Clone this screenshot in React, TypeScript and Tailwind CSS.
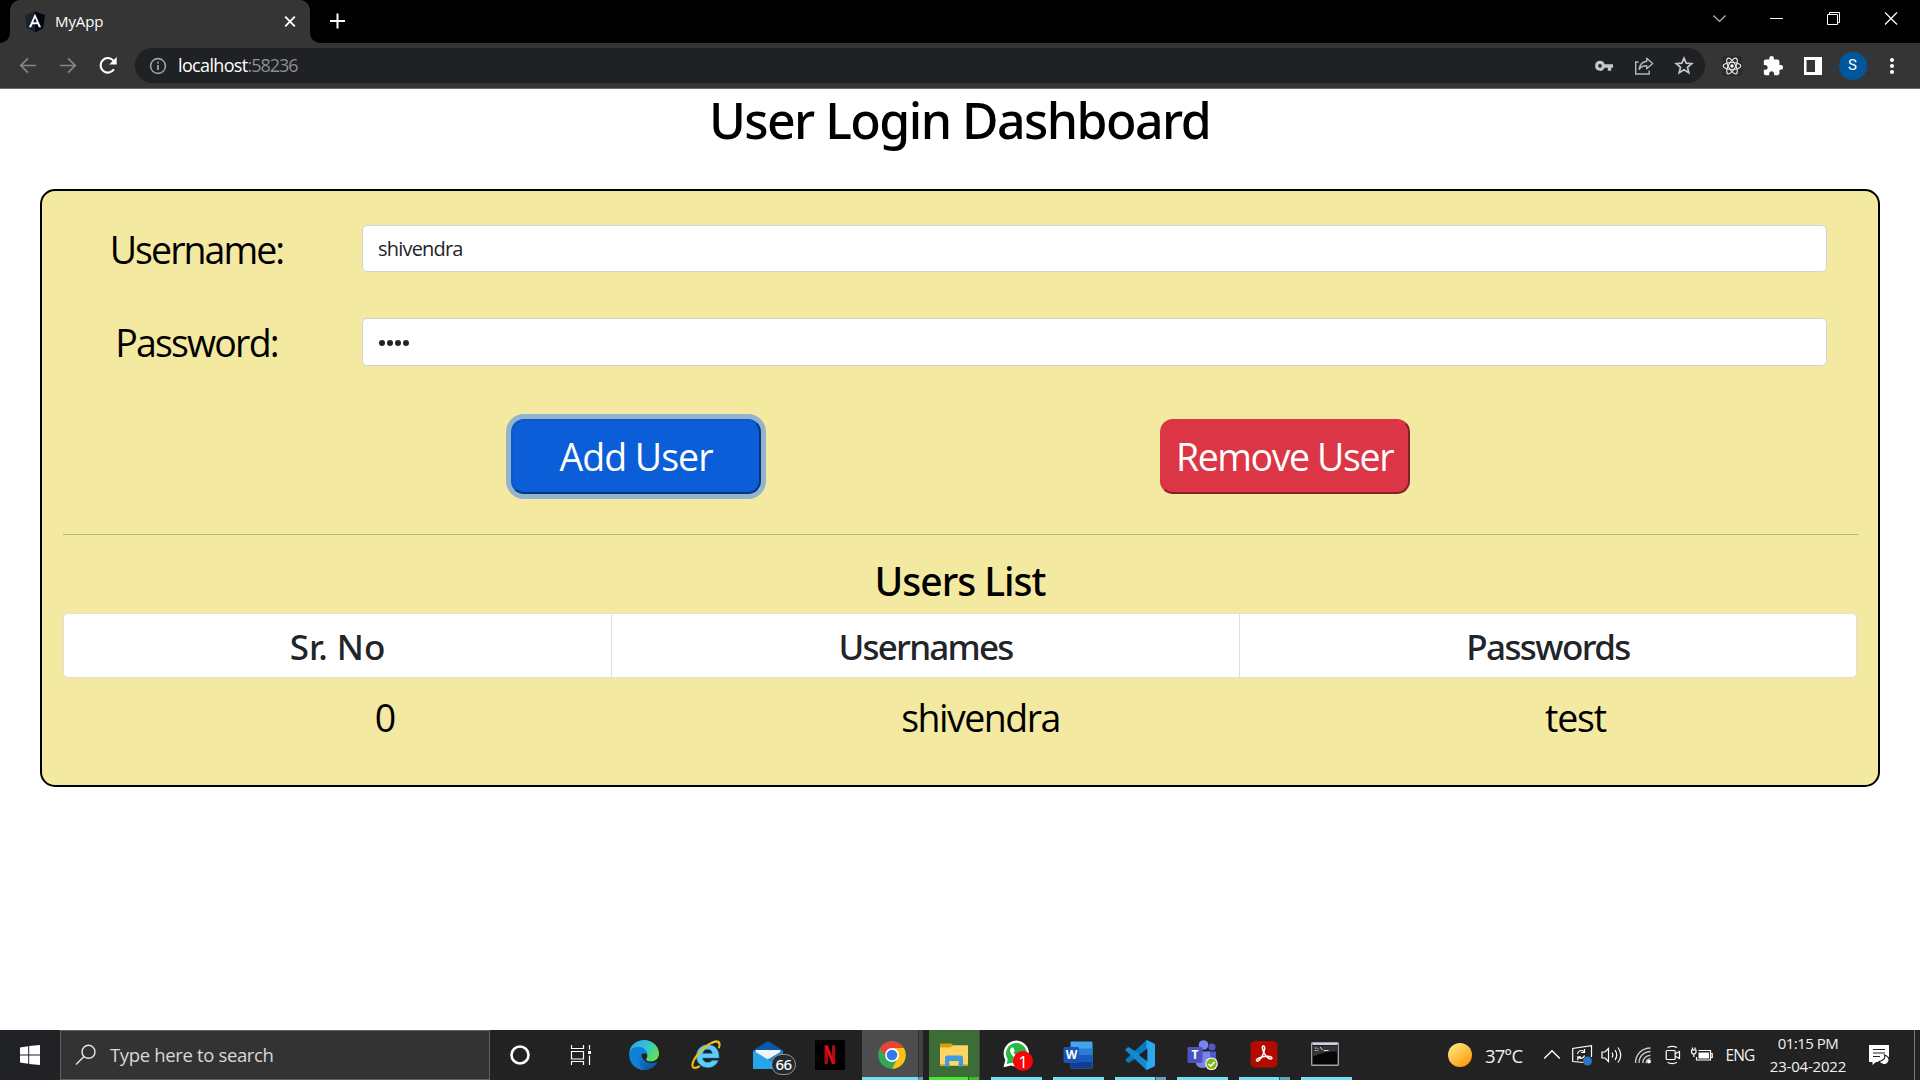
import type { ReactNode } from "react";

const sans = "font-['Open_Sans',sans-serif]";

/* ---------- Browser chrome ---------- */

function TabStrip() {
  return (
    <div className="flex h-[43px] items-start bg-black">
      <div className="flex w-[10px] self-stretch items-end bg-[#353535]">
        <div className="h-full w-full rounded-br-[10px] bg-black" />
      </div>
      <div className="flex h-[43px] w-[300px] items-center rounded-t-[10px] bg-[#353535] pl-[15px]">
        <svg width="20" height="22" viewBox="0 0 20 22" className="shrink-0">
          <path d="M10 0.500 L19.800 4 L18.300 17 L10 21.500 L1.700 17 L0.200 4Z" fill="#1d2230" />
          <path d="M10 0.500 L19.800 4 L18.300 17 L10 21.500Z" fill="#02060f" />
          <path d="M10 2.700 L3.900 16.300 H6.200 L7.400 13.200 H12.600 L13.800 16.300 H16.100Z M10 7 L11.800 11.300 H8.200Z" fill="#fff" fillRule="evenodd" />
        </svg>
        <span className="ml-[10px] w-[225px] -mt-[2px] text-[15px] leading-5 tracking-[-0.1px] text-white">MyApp</span>
        <svg width="20" height="20" viewBox="0 0 20 20" stroke="#fff" strokeWidth="1.900">
          <path d="M5.200 4.700L14.800 14.300M14.800 4.700L5.200 14.300" />
        </svg>
      </div>
      <div className="h-[43px] w-[10px] bg-[#353535]">
        <div className="h-full w-full rounded-bl-[10px] bg-black" />
      </div>
      <svg width="35" height="43" viewBox="0 0 35 43" stroke="#fff" strokeWidth="2">
        <path d="M10 21h15M17.500 13.500v15" />
      </svg>
      <div className="ml-auto flex h-[37px] items-center pr-[1px]">
        <svg width="57" height="37" viewBox="0 0 57 37" fill="none" stroke="#bbb" strokeWidth="1.200">
          <path d="M22.500 15.500l6 6 6-6" />
        </svg>
        <svg width="57" height="37" viewBox="0 0 57 37" fill="none" stroke="#fff">
          <path d="M22 18.500h13" />
        </svg>
        <svg width="57" height="37" viewBox="0 0 57 37" fill="none" stroke="#fff">
          <path d="M22.500 14.500h10v10h-10zM24.500 14.500v-2h10v10h-2" />
        </svg>
        <svg width="57" height="37" viewBox="0 0 57 37" fill="none" stroke="#fff" strokeWidth="1.200">
          <path d="M23 12.500l12 12M35 12.500l-12 12" />
        </svg>
      </div>
    </div>
  );
}

function Slot({ children, w }: { children: ReactNode; w: string }) {
  return <div className={`flex shrink-0 items-center justify-center ${w}`}>{children}</div>;
}

function Toolbar() {
  return (
    <div className="flex h-[46px] items-center border-b border-[#6a6a6a] bg-[#353535] pl-[7px]">
      <Slot w="w-[41px]">
        <svg width="18" height="18" viewBox="0 0 18 18" fill="none" stroke="#888" strokeWidth="1.700">
          <path d="M17 8.500H2M9 1.300L1.800 8.500L9 15.700" />
        </svg>
      </Slot>
      <Slot w="w-[40px]">
        <svg width="18" height="18" viewBox="0 0 18 18" fill="none" stroke="#888" strokeWidth="1.700">
          <path d="M1 8.500H16M9 1.300L16.200 8.500L9 15.700" />
        </svg>
      </Slot>
      <Slot w="w-[39px]">
        <svg width="20" height="20" viewBox="0 0 20 20">
          <path d="M16 13.300A7.300 7.300 0 1 1 15.600 4.800" fill="none" stroke="#fff" strokeWidth="2.100" />
          <path d="M18.700 1V8.500H11.200Z" fill="#fff" />
        </svg>
      </Slot>
      <div className="ml-[8px] flex h-[35px] w-[1570px] items-center rounded-full bg-[#202124] pl-[14px]">
        <svg width="18" height="18" viewBox="0 0 18 18" fill="none" stroke="#9aa0a6" strokeWidth="1.600">
          <circle cx="9" cy="9" r="7.400" />
          <path d="M9 8v5M9 4.800v1.800" strokeWidth="1.800" />
        </svg>
        <span className="-mt-[1px] ml-[11px] text-[18px] leading-6 text-white">
          <span className="tracking-[-0.65px]">localhost</span>
          <span className="tracking-[-1.05px] text-[#8b8e92]">:58236</span>
        </span>
        <div className="ml-auto flex items-center pr-[2px]">
          <Slot w="w-[40px]">
            <svg width="20" height="12" viewBox="0 0 20 12">
              <path d="M6 0.800a5 5 0 1 0 4.700 7h3.100v3h3.400v-3H19V4.200h-8.300A5 5 0 0 0 6 0.800ZM6 4.100a1.800 1.800 0 1 1 0 3.600 1.800 1.800 0 0 1 0-3.600Z" fill="#c4c6c9" fillRule="evenodd" />
            </svg>
          </Slot>
          <Slot w="w-[40px]">
            <svg width="20" height="20" viewBox="0 0 20 20" fill="none" stroke="#b5b7ba" strokeWidth="1.400">
              <path d="M4.500 6H1.700v12h13.500v-3.500" />
              <path d="M12.700 2.200L18.600 7.500L12.700 12.800V9.800C9 9.600 6.900 10.800 5.200 13.300C5.800 9.200 8 5.600 12.700 5.200Z" strokeLinejoin="round" />
            </svg>
          </Slot>
          <Slot w="w-[39px]">
            <svg width="20" height="20" viewBox="0 0 20 20" fill="none" stroke="#c4c6c9" strokeWidth="1.700">
              <path d="M10 2.200l2.200 5 5.500.500-4.200 3.600 1.300 5.400L10 13.800l-4.800 2.900 1.300-5.400L2.300 7.700l5.500-.500Z" />
            </svg>
          </Slot>
        </div>
      </div>
      <div className="ml-[7px] flex items-center">
        <Slot w="w-[40px]">
          <svg width="20" height="20" viewBox="0 0 20 20" fill="none" stroke="#e3e3e3" strokeWidth="1.200">
            <rect width="20" height="20" fill="#2b2b2b" stroke="none" />
            <ellipse cx="10" cy="10" rx="8.800" ry="3.500" />
            <ellipse cx="10" cy="10" rx="8.800" ry="3.500" transform="rotate(60 10 10)" />
            <ellipse cx="10" cy="10" rx="8.800" ry="3.500" transform="rotate(120 10 10)" />
            <circle cx="10" cy="10" r="1.700" fill="#fff" stroke="none" />
          </svg>
        </Slot>
        <Slot w="w-[41px]">
          <svg width="22" height="22" viewBox="0 0 24 24" fill="#fff">
            <path d="M20.500 11H19V7c0-1.100-.900-2-2-2h-4V3.500a2.500 2.500 0 0 0-5 0V5H4c-1.100 0-1.990.900-1.990 2v3.800H3.500c1.490 0 2.700 1.210 2.700 2.700s-1.210 2.700-2.700 2.700H2V20c0 1.100.900 2 2 2h3.800v-1.500c0-1.490 1.210-2.700 2.700-2.700 1.490 0 2.700 1.210 2.700 2.700V22H17c1.100 0 2-.900 2-2v-4h1.500a2.500 2.500 0 0 0 0-5Z" />
          </svg>
        </Slot>
        <Slot w="w-[39px]">
          <svg width="18" height="18" viewBox="0 0 18 18">
            <path d="M0 0h18v18H0ZM2.500 3v12H11V3Z" fill="#fff" fillRule="evenodd" />
          </svg>
        </Slot>
        <Slot w="w-[41px]">
          <div className="flex size-[28px] items-center justify-center rounded-full bg-[#01579b] font-['Roboto'] text-[15px] text-white">S</div>
        </Slot>
        <Slot w="w-[38px]">
          <svg width="6" height="18" viewBox="0 0 6 18" fill="#fff">
            <circle cx="3" cy="3" r="2" />
            <circle cx="3" cy="9" r="2" />
            <circle cx="3" cy="15" r="2" />
          </svg>
        </Slot>
      </div>
    </div>
  );
}

/* ---------- Page ---------- */

function Field({ label, tracking, height, children }: { label: string; tracking: string; height: string; children: ReactNode }) {
  return (
    <div className={`flex items-center ${height}`}>
      <label className={`w-[312px] pr-[3px] pt-[2px] text-center text-[37.5px] leading-[46px] ${tracking}`}>{label}</label>
      <div className="ml-[8px] flex h-full w-[1465px] items-center rounded-[5px] border border-[#ced4da] bg-white pl-[15px] text-[#212529]">
        {children}
      </div>
    </div>
  );
}

function Dashboard() {
  return (
    <main className="h-[941px] bg-white px-[40px] text-black">
      <h1 className="h-[100px] pr-[1px] text-center font-['Noto_Sans'] text-[50px] font-medium leading-[62px] tracking-[-1.550px]">User Login Dashboard</h1>
      <section className="h-[598px] rounded-[15px] border-2 border-black bg-[#f4e9a1] pt-[34px]">
        <Field label="Username:" tracking="tracking-[-1.95px]" height="h-[47px]">
          <span className="text-[20px] leading-[30px] tracking-[-0.8px]">shivendra</span>
        </Field>
        <div className="h-[46px]" />
        <Field label="Password:" tracking="tracking-[-1.8px]" height="h-[48px]">
          <span className="flex gap-[2px] pl-[1px] pt-[2px]">
            {[0, 1, 2, 3].map((i) => (
              <span key={i} className="size-[6px] rounded-full bg-[#212529]" />
            ))}
          </span>
        </Field>
        <div className="mt-[53px] flex gap-[399px] pl-[469px]">
          <button className="h-[75px] w-[250px] rounded-[13px] border-2 border-t-[#0a58ca] border-r-[#06357a] border-b-[#06357a] border-l-[#0a58ca] bg-[#0b5ed7] pt-[1px] text-[37.5px] leading-[70px] tracking-[-1px] text-white shadow-[0_0_0_5px_#91b5cf]">
            Add User
          </button>
          <button className="h-[75px] w-[250px] whitespace-nowrap rounded-[13px] border-2 border-t-[#dc3545] border-r-[#842029] border-b-[#842029] border-l-[#dc3545] bg-[#dc3545] pr-[1px] pt-[1px] text-[37.5px] leading-[70px] tracking-[-1.4px] text-white">
            Remove User
          </button>
        </div>
        <hr className="ml-[21px] mr-[20px] mt-[40px] border-t border-[#b9b07c]" />
        <h2 className="mt-[20px] h-[58px] text-center font-['Noto_Sans'] text-[39px] font-medium leading-[51px] tracking-[-1px]">Users List</h2>
        <div className="mx-[21px] flex h-[65px] overflow-hidden rounded-[5px] border border-[#dfdfdf] bg-white text-center font-['Noto_Sans'] text-[35px] font-medium leading-[65px] text-[#212529]">
          <div className="w-[548px] border-r border-[#dfdfdf]">Sr. No</div>
          <div className="w-[628px] border-r border-[#dfdfdf] tracking-[-1.75px]">Usernames</div>
          <div className="flex-1 tracking-[-1.6px]">Passwords</div>
        </div>
        <div className="ml-[46px] mt-[14px] grid w-[1785px] grid-cols-3 text-center text-[37.5px] leading-[51px]">
          <div>0</div>
          <div className="tracking-[-1.5px]">shivendra</div>
          <div className="tracking-[-1.2px]">test</div>
        </div>
      </section>
    </main>
  );
}

/* ---------- Taskbar ---------- */

function App62({ children, line, extra = false }: { children: ReactNode; line?: boolean; extra?: boolean }) {
  return (
    <div className="flex w-[62px] flex-col items-center">
      <div className="flex h-[47px] items-center justify-center pt-[3px]">{children}</div>
      {line && (
        <div className="flex h-[3px] w-[51px] bg-[#76dcf8]">
          {extra && <div className="ml-auto w-[11px] border-l border-[#2c5965] bg-[#5aa5ba]" />}
        </div>
      )}
    </div>
  );
}

function EdgeIcon() {
  return (
    <svg width="30" height="30" viewBox="0 0 30 30">
      <defs>
        <linearGradient id="edgeTop" x1="0" x2="1" y1="0.200" y2="0.700">
          <stop offset="0" stopColor="#2ba7e6" />
          <stop offset="0.500" stopColor="#31c6d6" />
          <stop offset="1" stopColor="#66e346" />
        </linearGradient>
        <linearGradient id="edgeLow" x1="0" x2="1" y1="0" y2="1">
          <stop offset="0" stopColor="#1380d8" />
          <stop offset="1" stopColor="#0b4a94" />
        </linearGradient>
      </defs>
      <path d="M0.200 13C1 5 7.500 0 15 0C24 0 30 6.500 30 13.500C30 18.500 26 21.500 22 21.500C18.500 21.500 16.800 20.200 17 19C18.300 17.500 18.500 16.500 18.200 14.500C17 10.500 13 8 9 8C5 8 1.500 10.500 0.200 13Z" fill="url(#edgeTop)" />
      <path d="M0.200 13C1.600 9 5.300 6.800 9 6.800C14 6.800 18.300 10.300 18.400 14.500C15.500 12 11.800 13.700 11.500 17.500C11.300 22.500 15 26.500 20.500 27C22 27 21 28.800 15 30C6.500 30-.800 22.500.200 13Z" fill="#0f7fd8" />
      <path d="M11.900 14.500C8.500 19 9.500 27 15.500 30C21 30 25.800 26.800 28.300 22.400C28.400 21.800 27.900 21.700 27.400 22C21 25 14 22 11.900 14.500Z" fill="url(#edgeLow)" />
    </svg>
  );
}

function ExplorerEIcon() {
  return (
    <svg width="30" height="30" viewBox="0 0 30 30" fill="none">
      <path d="M27.300 20.500C25.300 25 21.500 27.500 16.800 27.500C10.300 27.500 5.500 22.800 5.500 16.200C5.500 9.500 10.300 4.800 16.800 4.800C24 4.800 28.500 10 28 18H11.500C11.800 20.800 13.900 22.500 16.800 22.500C18.800 22.500 20.200 21.800 21 20.500Z M11.700 13.500H21.500C21.200 10.800 19.200 9.300 16.600 9.300C14 9.300 12.200 10.800 11.700 13.500Z" fill="#5bcdf8" fillRule="evenodd" stroke="#2b8fce" strokeWidth="0.500" />
      <path d="M28 7.500C29.500 3 28 0.500 24 1.500C15.500 3.800 3 16.500 1.500 24C.700 28.600 4 28.700 8 26.500" stroke="#f2b90f" strokeWidth="2.100" strokeLinecap="round" />
      <path d="M27.500 4C27 1.500 24.500 1.300 21 3.200" stroke="#ffe36b" strokeWidth="1" />
    </svg>
  );
}

function MailIcon() {
  return (
    <div className="relative size-[30px]">
      <svg width="30" height="30" viewBox="0 0 30 30">
        <path d="M0 10.500L15 1L30 10.500V12H0Z" fill="#0a5aa8" />
        <path d="M2.500 10H27.500V16L15 20L2.500 16Z" fill="#f3f3f3" />
        <path d="M0 10.500L15 19.500L30 10.500V29H0Z" fill="#26a5ea" />
        <path d="M30 10.500V29L13 18.500L15 19.500Z" fill="#1886cf" />
      </svg>
      <span className="absolute left-[18px] top-[14px] flex h-[21px] w-[25px] items-center justify-center rounded-full border border-[#9a9a9a] bg-[#222b2f] font-['Noto_Sans'] text-[15px] font-medium leading-none tracking-[-0.5px] text-white">
        66
      </span>
    </div>
  );
}

function NetflixIcon() {
  return (
    <svg width="30" height="30" viewBox="0 0 30 30">
      <rect width="30" height="30" fill="#000" />
      <path d="M9.500 5.500h3.400v18.200l-3.400.500Z" fill="#a90d14" />
      <path d="M16.900 5.500h3.300v18.700l-3.300-.500Z" fill="#a90d14" />
      <path d="M9.500 5.500h3.400l7.300 18.700l-3.300-.500Z" fill="#e50914" />
    </svg>
  );
}

function ChromeIcon() {
  return (
    <svg width="28" height="28" viewBox="0 0 28 28">
      <circle cx="14" cy="14" r="13.800" fill="#34a853" />
      <path d="M2.050 7.100A13.800 13.800 0 0 1 25.950 7.100L14 7.700L8.500 17.200Z" fill="#ea4335" />
      <path d="M25.950 7.100A13.800 13.800 0 0 1 14 27.800L19.500 17.200L14 7.100Z" fill="#fbc116" />
      <circle cx="14" cy="14" r="6.900" fill="#fff" />
      <circle cx="14" cy="14" r="5.300" fill="#3079ee" />
    </svg>
  );
}

function FolderIcon() {
  return (
    <svg width="28" height="24" viewBox="0 0 28 24">
      <path d="M0 1.200Q0 0.500 .8.500H11.500L13.500 2.500L12.500 5H0Z" fill="#e19d08" />
      <path d="M0 4.500H10.500L13.500 2.200H27Q28 2.200 28 3V22.500H0Z" fill="#ffd463" />
      <path d="M0 21H28V22.500H0Z" fill="#e8ac32" />
      <path d="M5 23.500V15Q5 12.500 7.500 12.500H20.500Q23 12.500 23 15V23.500H18.500V18H9.500V23.500Z" fill="#3d9be0" />
      <path d="M9.500 18H18.500V22.500H9.500Z" fill="#ffd463" />
    </svg>
  );
}

function WhatsAppIcon() {
  return (
    <div className="relative flex size-[30px] items-start pl-[2px]">
      <svg width="27" height="28" viewBox="0 0 27 28">
        <path d="M13.500.500A13 13 0 0 0 2.300 20L.500 27.300L8 25.500A13 13 0 1 0 13.500.500Z" fill="#fff" />
        <path d="M13.500 3A10.500 10.500 0 0 0 4.700 19.200L3.700 24L8.400 22.800A10.500 10.500 0 1 0 13.500 3Z" fill="#2bb741" />
        <path d="M8.800 7.500C6.500 9 6.700 12 9 15C12 19 16 21 18.500 20L20 17L16.500 15.200L15 16.500C13 16 11 14 10.500 12.300L11.700 10.800L10.300 7.500Z" fill="#fff" />
      </svg>
      <span className="absolute left-[12px] top-[11px] flex size-[20px] items-center justify-center rounded-full bg-[#f60606] text-[17px] leading-none text-white">1</span>
    </div>
  );
}

function WordIcon() {
  return (
    <div className="relative h-[28px] w-[30px]">
      <svg width="30" height="28" viewBox="0 0 30 28">
        <rect x="7.500" y="0.500" width="22" height="27" rx="1.200" fill="#41a5ee" />
        <path d="M7.500 7.500H29.500V14H7.500Z" fill="#2b7cd3" />
        <path d="M7.500 14H29.500V21H7.500Z" fill="#185abd" />
        <path d="M7.500 21H29.500V26.300Q29.500 27.500 28.300 27.500H7.500Z" fill="#103f91" />
        <rect x="0.500" y="6" width="15.500" height="16" rx="1.200" fill="#1b55b3" />
      </svg>
      <span className="absolute left-[1px] top-[6px] w-[15px] text-center text-[12px] font-bold leading-[16px] text-white">W</span>
    </div>
  );
}

function CodeIcon() {
  return (
    <svg width="30" height="30" viewBox="0 0 30 30">
      <path d="M21.500 0L29 3.400Q30 4 30 5V7L3.700 22.700Q3.100 23.100 2.500 22.600L.600 20.800Q0 20 .600 19.400Z" fill="#0879bf" />
      <path d="M21.500 30L29 26.600Q30 26 30 25V23L3.700 7.300Q3.100 6.900 2.500 7.400L.600 9.200Q0 10 .600 10.600Z" fill="#138bd4" />
      <path d="M21.500 0L29 3.400Q30 4 30 5V25Q30 26 29 26.600L21.500 30Z" fill="#29a8f0" />
      <path d="M22.400 8.600V21.400L13.800 15Z" fill="#222" />
    </svg>
  );
}

function TeamsIcon() {
  return (
    <div className="relative h-[30px] w-[30px]">
      <svg width="31" height="30" viewBox="0 0 31 30">
        <circle cx="25" cy="7" r="3.500" fill="#5059c9" />
        <path d="M20 11.500H29V20Q29 24.500 24.500 24.500H20Z" fill="#5059c9" />
        <circle cx="16.500" cy="5" r="4.800" fill="#7b83eb" />
        <path d="M8.500 11.500H23V21Q23 28 15.500 28Q8.500 27.500 8.500 21Z" fill="#7b83eb" />
        <rect x="0.500" y="7" width="15" height="16" rx="1.200" fill="#4b53bc" />
        <circle cx="24.500" cy="23.800" r="6.300" fill="#fff" />
        <circle cx="24.500" cy="23.800" r="5.200" fill="#84b516" />
        <path d="M21.500 24L23.800 26.200L27.700 21.800" fill="none" stroke="#fff" strokeWidth="1.600" />
      </svg>
      <span className="absolute left-[1px] top-[7px] w-[14px] text-center text-[12px] font-bold leading-[16px] text-white">T</span>
    </div>
  );
}

function AcrobatIcon() {
  return (
    <svg width="28" height="30" viewBox="0 0 28 30">
      <rect x="0.500" y="1" width="27" height="26.500" rx="4.500" fill="#b30b00" />
      <path d="M13.800 6C11.800 5.300 11.900 9 14 13C16 16.800 19.500 19.500 21.300 18.900C23 18 21 16 16.500 16.300C12 16.600 6.500 18.300 6.500 20.500C7.500 22.800 11 18.800 13 14.500C14.700 10.500 15.300 6.500 13.800 6Z" fill="none" stroke="#fff" strokeWidth="1.500" />
    </svg>
  );
}

function ConsoleIcon() {
  return (
    <svg width="30" height="26" viewBox="0 0 30 26">
      <rect x="0.700" y="0.700" width="26.600" height="22.600" rx="0.800" fill="#060606" stroke="#9aa3ad" strokeWidth="1.400" />
      <path d="M1.500 1h25v2h-25Z" fill="#cbd2da" />
      <path d="M1.500 3.500h25V9.500C18 9 9 11 1.500 15Z" fill="#353535" />
      <path d="M4 6h1.500M4 8.500h1.500M7 6v.800M7 8v.800M9 5l2.500 3M12.500 8.500h5" stroke="#ddd" strokeWidth="1" />
    </svg>
  );
}

function Tray() {
  return (
    <div className="ml-auto flex h-[50px] items-center text-[#f1f1f1]">
      <Slot w="w-[34px]">
        <svg width="24" height="24" viewBox="0 0 24 24">
          <defs>
            <linearGradient id="sun" x1="0.200" x2="0.850" y1="0.100" y2="0.900">
              <stop offset="0" stopColor="#ffe278" />
              <stop offset="1" stopColor="#ff9a0c" />
            </linearGradient>
          </defs>
          <circle cx="12" cy="12" r="12" fill="url(#sun)" />
        </svg>
      </Slot>
      <span className="w-[60px] pl-[8px] pt-[2px] text-[18.5px] leading-6 tracking-[-0.9px]">37°C</span>
      <Slot w="w-[30px]">
        <svg width="18" height="12" viewBox="0 0 18 12" fill="none" stroke="#fff" strokeWidth="1.400">
          <path d="M1.200 9.500L9 1.700L16.800 9.500" />
        </svg>
      </Slot>
      <Slot w="w-[30px]">
        <svg width="22" height="22" viewBox="0 0 22 22" fill="none" stroke="#fff" strokeWidth="1.200">
          <path d="M13 18.500L1.700 17.500V4.500L20.500 1.700V13" />
          <path d="M6.500 10A3.800 3.800 0 0 1 13 7.700M13.500 5V8.500H10M13.500 11.500A3.800 3.800 0 0 1 7.300 13.300M6.800 16.300V12.800H10" />
          <circle cx="16.500" cy="17" r="4.500" fill="#2b77c5" stroke="none" />
        </svg>
      </Slot>
      <Slot w="w-[30px]">
        <svg width="22" height="20" viewBox="0 0 22 20" fill="none" stroke="#fff" strokeWidth="1.200">
          <path d="M1 7H4L7.500 3.500V16.500L4 13H1Z" />
          <path d="M11 7.500Q12.700 10 11 12.500M14 5Q17.400 10 14 15M17 2.500Q22.500 10 17 17.500" />
        </svg>
      </Slot>
      <Slot w="w-[31px]">
        <svg width="18" height="18" viewBox="0 0 18 18" fill="none" stroke="#ccc" strokeWidth="1.300">
          <path d="M1.500 17C1.500 8.500 8 2 16.500 2M5 17C5 10.500 10 5.500 16.500 5.500M8.800 17C8.800 12.500 12.300 9.300 16.500 9.300" />
          <circle cx="15" cy="15.500" r="1.900" fill="#fff" stroke="none" />
          <path d="M12.200 17.200Q12.200 12.800 16.500 12.600" />
        </svg>
      </Slot>
      <Slot w="w-[30px]">
        <svg width="16" height="20" viewBox="0 0 16 20" fill="none" stroke="#fff" strokeWidth="1.200">
          <rect x="1.200" y="5.500" width="9" height="9" rx="1" />
          <path d="M10.200 8.800L14.500 6.500V13.500L10.200 11.200M2.500 2.500Q7 .400 12 2.500M2.500 17.500Q7 19.600 12 17.500" />
        </svg>
      </Slot>
      <Slot w="w-[28px]">
        <svg width="22" height="16" viewBox="0 0 22 16" fill="none" stroke="#fff" strokeWidth="1.200">
          <path d="M7.500 3.500H19.500V13H5.500V10M20 6.500H21.200V10.500H20" />
          <rect x="7.500" y="5.500" width="10.500" height="6" fill="#fff" stroke="none" />
          <path d="M1.500 .500V3M4 .500V3" />
          <path d="M0.600 3H5V5.500Q4.500 7 2.800 7Q1 7 .600 5.500ZM2.800 7V10" />
        </svg>
      </Slot>
      <span className="w-[48px] text-center text-[15.5px] leading-5 tracking-[-0.8px]">ENG</span>
      <div className="w-[88px] text-center text-[15px] leading-[23px]">
        <div className="tracking-[-0.5px]">01:15 PM</div>
        <div className="tracking-[-0.2px]">23-04-2022</div>
      </div>
      <Slot w="w-[54px]">
        <svg width="22" height="22" viewBox="0 0 22 22">
          <path d="M1 1H21V18H8L4.500 21V18H1Z" fill="#fff" />
          <path d="M5 5.500H17M5 9H17M5 12.500H12" stroke="#222" strokeWidth="1.200" />
          <path d="M16.500 11Q18 16 11 17.500Q13 21.500 17.500 20.500Q21.500 19 21 15Q20 12 16.500 11Z" fill="#fff" stroke="#222" strokeWidth="1.200" />
        </svg>
      </Slot>
      <div className="ml-[8px] mr-[5px] h-[50px] w-px bg-[#777]" />
    </div>
  );
}

function Taskbar() {
  return (
    <footer className="flex h-[50px] bg-[#222222]">
      <div className="flex w-[60px] items-center justify-center bg-[#202226]">
        <svg width="20" height="20" viewBox="0 0 20 20" fill="#fff">
          <path d="M0 2.400L8.200 1.300V9.500H0ZM9.200 1.100L20 0V9.500H9.200ZM0 10.500H8.200V18.700L0 17.600ZM9.200 10.500H20V20L9.200 18.900Z" />
        </svg>
      </div>
      <div className="flex w-[430px] items-center border border-[#606060] bg-[#333333] pl-[14px]">
        <svg width="22" height="22" viewBox="0 0 22 22" fill="none" stroke="#e6e6e6" strokeWidth="1.400">
          <circle cx="13.500" cy="7.800" r="6.500" />
          <path d="M9 12.500L1 20.500" />
        </svg>
        <span className="ml-[13px] text-[18.5px] leading-6 tracking-[-0.35px] text-[#d8d8d8]">Type here to search</span>
      </div>
      <Slot w="w-[60px]">
        <svg width="22" height="22" viewBox="0 0 22 22" fill="none" stroke="#fff" strokeWidth="2.600">
          <circle cx="11" cy="11" r="8.500" />
        </svg>
      </Slot>
      <Slot w="w-[63px]">
        <svg width="24" height="20" viewBox="0 0 24 20" fill="none" stroke="#fff" strokeWidth="1.200">
          <path d="M1.500 0V3.500H13.500V0M1.500 20V16.500H13.500V20M1.500 6.500H13.500V14H1.500ZM19.500 0V4.500M19.500 10.500V20" />
          <rect x="18" y="6" width="3" height="3" fill="#fff" stroke="none" />
        </svg>
      </Slot>
      <App62><EdgeIcon /></App62>
      <App62><ExplorerEIcon /></App62>
      <App62><MailIcon /></App62>
      <App62><NetflixIcon /></App62>
      <div className="flex w-[62px]">
        <div className="ml-[1px] flex w-[56px] flex-col border-b-[3px] border-[#76dcf8] bg-[#4d4d4d]">
          <div className="flex h-[47px] items-center justify-center pl-[3px] pt-[3px]"><ChromeIcon /></div>
        </div>
        <div className="w-[5px] border-b-[3px] border-l border-b-[#5aa5ba] border-l-[#303030] bg-[#424242]" />
      </div>
      <div className="flex w-[62px] pl-[6px]">
        <div className="flex w-[50px] flex-col bg-[#3d6d36]">
          <div className="flex h-[47px] items-center justify-center pt-[2px]"><FolderIcon /></div>
          <div className="flex h-[3px] bg-[#4fe33a]"><div className="ml-auto w-[11px] border-l border-[#25651c] bg-[#41b530]" /></div>
        </div>
        <div className="w-px bg-[#444]" />
      </div>
      <App62 line><WhatsAppIcon /></App62>
      <App62 line><WordIcon /></App62>
      <App62 line extra><CodeIcon /></App62>
      <App62 line><TeamsIcon /></App62>
      <App62 line extra><AcrobatIcon /></App62>
      <App62 line><ConsoleIcon /></App62>
      <Tray />
    </footer>
  );
}

export default function App() {
  return (
    <div className={`h-[1080px] w-[1920px] overflow-hidden bg-white ${sans}`}>
      <TabStrip />
      <Toolbar />
      <Dashboard />
      <Taskbar />
    </div>
  );
}
